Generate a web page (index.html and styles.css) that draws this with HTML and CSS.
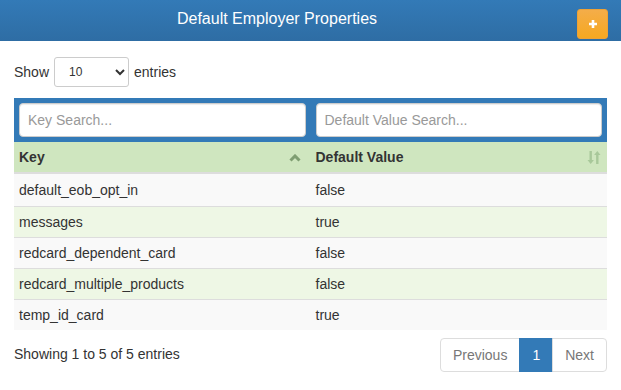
FILE: index.html
```html
<!DOCTYPE html>
<html lang="en">
<head>
    <meta charset="UTF-8">
    <title>Default Employer Properties</title>
    <link rel="stylesheet" href="styles.css">
</head>
<body>
    <div class="panel-heading">
        <h3 class="panel-title">Default Employer Properties</h3>
        <div class="heading-actions">
            <button class="btn-add" type="button" title="Add">
                <svg width="10" height="10" viewBox="0 0 10 10">
                    <path d="M5 1v8M1 5h8" stroke="#fff" stroke-width="2.6"/>
                </svg>
            </button>
        </div>
    </div>

    <div class="content">
        <div class="length">
            <label>Show
                <select class="length-select">
                    <option>10</option>
                    <option>25</option>
                    <option>50</option>
                    <option>100</option>
                </select>
                entries</label>
        </div>

        <table class="grid">
            <thead>
                <tr class="search-row">
                    <td><input type="text" class="search" placeholder="Key Search..."></td>
                    <td><input type="text" class="search" placeholder="Default Value Search..."></td>
                </tr>
                <tr class="head-row">
                    <th>
                        <span>Key</span>
                        <svg class="sort" width="12" height="8" viewBox="0 0 12 8">
                            <path d="M1.5 6.5L6 2l4.5 4.5" fill="none" stroke="#7f9e72" stroke-width="3"/>
                        </svg>
                    </th>
                    <th>
                        <span>Default Value</span>
                        <svg class="sort" width="14" height="15" viewBox="0 0 14 15">
                            <g fill="#a8c89a">
                                <rect x="2.5" y="1" width="2.4" height="10"/>
                                <path d="M0.5 10h6.4l-3.2 4z"/>
                                <rect x="9.1" y="4" width="2.4" height="10"/>
                                <path d="M7.1 5h6.4l-3.2-4z"/>
                            </g>
                        </svg>
                    </th>
                </tr>
            </thead>
            <tbody>
                <tr><td>default_eob_opt_in</td><td>false</td></tr>
                <tr><td>messages</td><td>true</td></tr>
                <tr><td>redcard_dependent_card</td><td>false</td></tr>
                <tr><td>redcard_multiple_products</td><td>false</td></tr>
                <tr><td>temp_id_card</td><td>true</td></tr>
            </tbody>
        </table>

        <div class="table-footer">
            <div class="info">Showing 1 to 5 of 5 entries</div>
            <ul class="pagination">
                <li class="disabled"><a href="#">Previous</a></li>
                <li class="active"><a href="#">1</a></li>
                <li class="disabled"><a href="#">Next</a></li>
            </ul>
        </div>
    </div>
</body>
</html>
```

FILE: styles.css
```css
* {
    box-sizing: border-box;
}

body {
    margin: 0;
    background: #fff;
    color: #333;
    font-family: "Liberation Sans", Arial, sans-serif;
    font-size: 14px;
    line-height: 20px;
}

/* top bar */
.panel-heading {
    height: 41px;
    display: flex;
    align-items: flex-start;
    background: linear-gradient(to bottom, #337ab7 0%, #2e6da4 100%);
}

.panel-title {
    flex: 1;
    margin: 0;
    padding-top: 9px;
    text-align: center;
    color: #fff;
    font-size: 16px;
    font-weight: normal;
    line-height: 20px;
}

.heading-actions {
    width: 67px;
    display: flex;
    justify-content: flex-end;
    padding: 9px 13px 0 0;
}

.btn-add {
    width: 31px;
    height: 30px;
    padding: 0;
    border: 1px solid #eea236;
    border-radius: 3px;
    background: linear-gradient(to bottom, #f4ad49 0%, #f6a821 100%);
    display: flex;
    align-items: center;
    justify-content: center;
}

.content {
    padding: 0 14px;
}

/* show entries */
.length {
    padding-top: 16px;
    height: 57px;
}

.length label {
    display: flex;
    align-items: center;
    gap: 5px;
    font-weight: normal;
}

.length-select {
    width: 75px;
    height: 30px;
    padding: 0 6px 0 10px;
    border: 1px solid #ccc;
    border-radius: 3px;
    background: #fff;
    color: #333;
    font-family: "Liberation Sans", Arial, sans-serif;
    font-size: 12px;
}

/* table */
.grid {
    width: 100%;
    border-collapse: collapse;
    table-layout: fixed;
}

.grid td,
.grid th {
    padding: 5px;
    text-align: left;
    vertical-align: middle;
}

.search-row td {
    background: #337ab7;
}

.search {
    width: 100%;
    height: 34px;
    padding: 6px 8px;
    border: 1px solid #ccc;
    border-radius: 4px;
    box-shadow: inset 0 1px 1px rgba(0, 0, 0, 0.075);
    font-family: "Liberation Sans", Arial, sans-serif;
    font-size: 14px;
    color: #555;
}

.search::placeholder {
    color: #999;
}

.head-row th {
    position: relative;
    background: #cfe6bf;
    border-bottom: 2px solid #ddd;
    font-weight: bold;
    color: #333;
}

.head-row th span {
    display: block;
}

.sort {
    position: absolute;
    right: 6px;
    top: 8px;
}

.head-row th:first-child .sort {
    top: 12px;
    right: 10px;
}

.grid tbody td {
    border-top: 1px solid #ddd;
}

.grid tbody tr:first-child td {
    padding-top: 6px;
    padding-bottom: 6px;
}

.grid tbody tr:nth-child(odd) td {
    background: #f9f9f9;
}

.grid tbody tr:nth-child(even) td {
    background: #eef7e5;
}

/* footer */
.table-footer {
    display: flex;
    justify-content: space-between;
    align-items: flex-start;
    margin-top: 8px;
}

.info {
    padding-top: 6px;
}

.pagination {
    display: flex;
    margin: 0;
    padding: 0;
    list-style: none;
}

.pagination a {
    display: block;
    padding: 6px 12px;
    border: 1px solid #ddd;
    margin-left: -1px;
    color: #777;
    text-decoration: none;
    background: #fff;
}

.pagination li:first-child a {
    margin-left: 0;
    border-radius: 4px 0 0 4px;
}

.pagination li:last-child a {
    border-radius: 0 4px 4px 0;
}

.pagination .active a {
    background: #337ab7;
    border-color: #337ab7;
    color: #fff;
}
```
